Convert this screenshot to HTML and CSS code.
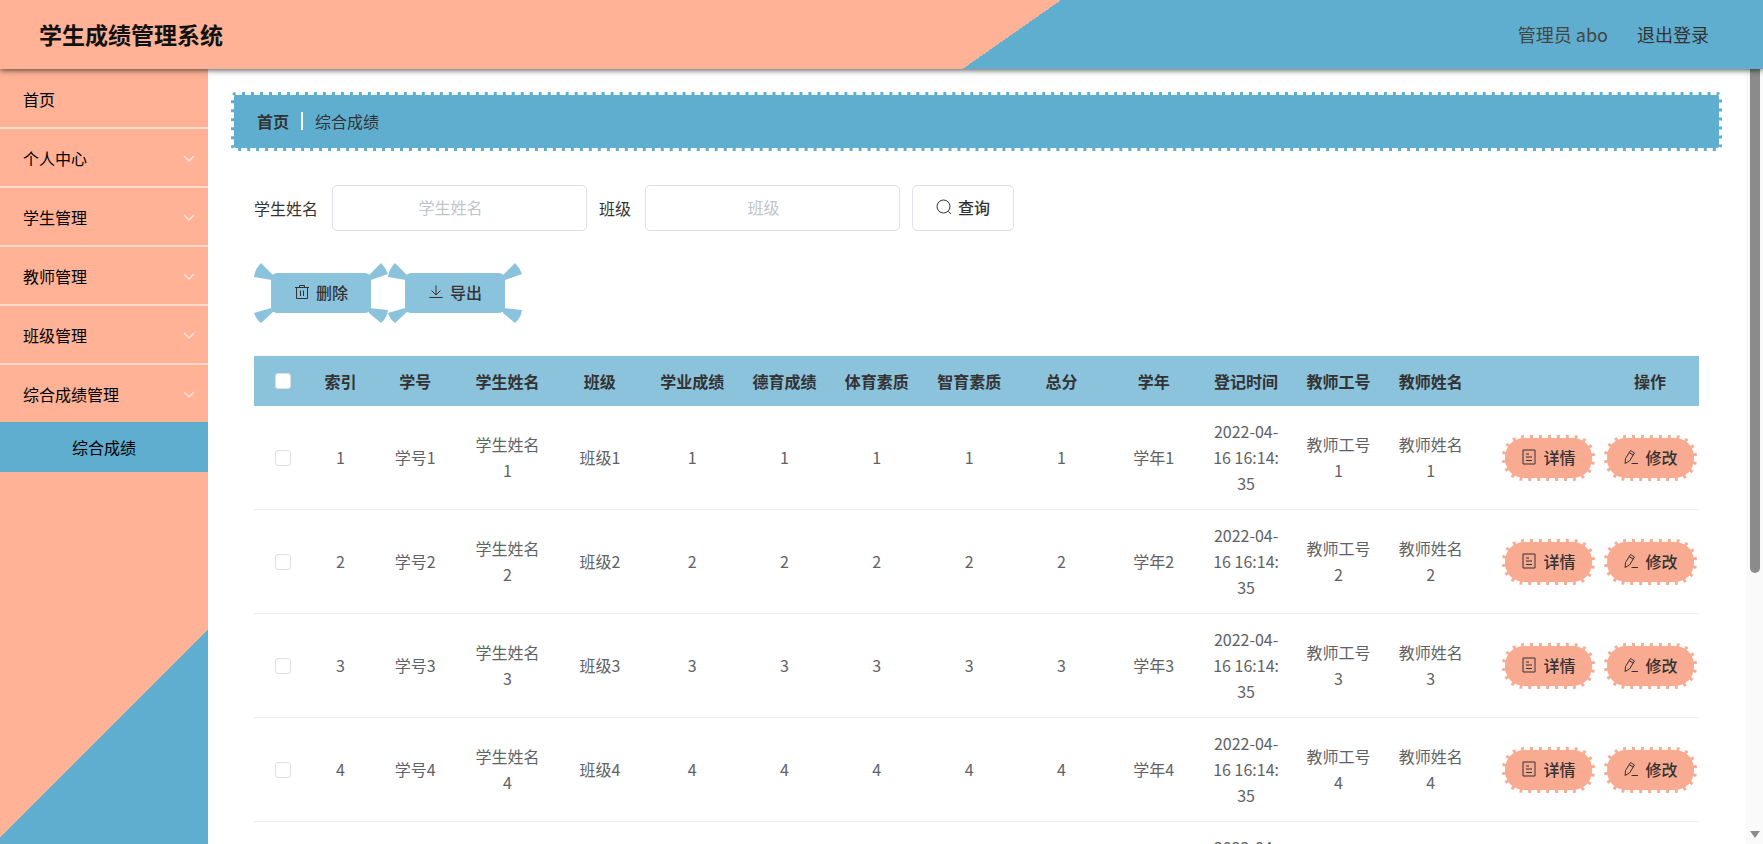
FILE: index.html
```html
<!DOCTYPE html>
<html lang="zh-CN">
<head>
    <meta charset="UTF-8" />
    <title>学生成绩管理系统</title>
    <link rel="stylesheet" href="styles.css">
</head>
<body>

<svg class="sprite" aria-hidden="true">
    <symbol id="i-arrow" viewBox="0 0 14 14"><path d="M2 5l5 5 5-5" /></symbol>
    <symbol id="i-search" viewBox="0 0 16 16"><circle cx="7.5" cy="7.5" r="6.5" /><path d="M12.3 12.3L15 15" /></symbol>
    <symbol id="i-delete" viewBox="0 0 16 16"><path d="M1 3.5h14M5.500 3.500V1.500h5v2M2.500 3.500V14.500h11V3.500M6.500 6.500v5.500M9.500 6.500v5.500" /></symbol>
    <symbol id="i-download" viewBox="0 0 16 16"><path d="M8 1.500v9M3.500 6.500L8 11l4.500-4.500M1.500 13.500h13" /></symbol>
    <symbol id="i-detail" viewBox="0 0 16 16"><path d="M2 1h12v14H2zM5 5h3M5 8h6M5 11.500h6" /></symbol>
    <symbol id="i-edit" viewBox="0 0 16 16"><path d="M2 14.500l.5-5L7.500 1.500 11.500 4 6.500 12zM6.200 3.600l4 2.500M8.500 14.500H15" /></symbol>
    <symbol id="i-horns" viewBox="0 0 134 60"><path d="M19 12L7 0Q1 6 0 14L18 17zM115 12L127 0Q132 5 134 11L117 17zM17 45L0 50Q2 56 7 60L20 48zM115 45L134 47Q133 55 127 60L115 50z" /></symbol>
</svg>

<header class="header">
    <h1>学生成绩管理系统</h1>
    <div class="user">
        <span>管理员 abo</span>
        <a href="#">退出登录</a>
    </div>
</header>

<div class="container">
    <nav class="sidebar">
        <a href="#">首页</a>
        <a href="#">个人中心<svg class="arrow"><use href="#i-arrow" /></svg></a>
        <a href="#">学生管理<svg class="arrow"><use href="#i-arrow" /></svg></a>
        <a href="#">教师管理<svg class="arrow"><use href="#i-arrow" /></svg></a>
        <a href="#">班级管理<svg class="arrow"><use href="#i-arrow" /></svg></a>
        <a href="#" class="open">综合成绩管理<svg class="arrow"><use href="#i-arrow" /></svg></a>
        <a href="#" class="sub">综合成绩</a>
    </nav>

    <main class="main">
        <div class="breadcrumb">
            <a href="#">首页</a>
            <span class="line"></span>
            <span>综合成绩</span>
        </div>

        <form class="search">
            <label for="name">学生姓名</label>
            <input type="text" id="name" placeholder="学生姓名">
            <label for="grade">班级</label>
            <input type="text" id="grade" placeholder="班级">
            <button type="button"><svg class="icon"><use href="#i-search" /></svg>查询</button>
        </form>

        <div class="actions">
            <button type="button"><svg class="horns"><use href="#i-horns" /></svg><svg class="icon"><use href="#i-delete" /></svg>删除</button>
            <button type="button"><svg class="horns"><use href="#i-horns" /></svg><svg class="icon"><use href="#i-download" /></svg>导出</button>
        </div>

        <table>
            <colgroup>
                <col class="col-check">
                <col class="col-index">
                <col span="12">
                <col class="col-ops">
            </colgroup>
            <thead>
                <tr>
                    <th><input type="checkbox" aria-label="全选"></th>
                    <th>索引</th>
                    <th>学号</th>
                    <th>学生姓名</th>
                    <th>班级</th>
                    <th>学业成绩</th>
                    <th>德育成绩</th>
                    <th>体育素质</th>
                    <th>智育素质</th>
                    <th>总分</th>
                    <th>学年</th>
                    <th>登记时间</th>
                    <th>教师工号</th>
                    <th>教师姓名</th>
                    <th class="ops-title">操作</th>
                </tr>
            </thead>
            <tbody id="rows"></tbody>
        </table>
    </main>

    <div class="scrollbar" aria-hidden="true">
        <div class="thumb"></div>
        <div class="down"></div>
    </div>
</div>

<script>
    const rows = document.getElementById('rows');

    for (let i = 1; i <= 5; i++) {
        const cells = [i, '学号' + i, '学生姓名' + i, '班级' + i, i, i, i, i, i,
            '学年' + i, '2022-04-16 16:14:35', '教师工号' + i, '教师姓名' + i];
        const tr = document.createElement('tr');

        tr.innerHTML = '<td><input type="checkbox" aria-label="选择' + i + '"></td>' +
            cells.map(c => '<td>' + c + '</td>').join('') +
            '<td class="ops"><div>' +
            '<button type="button"><svg class="icon"><use href="#i-detail" /></svg>详情</button>' +
            '<button type="button"><svg class="icon"><use href="#i-edit" /></svg>修改</button>' +
            '</div></td>';
        rows.appendChild(tr);
    }
</script>

</body>
</html>
```
FILE: styles.css
```css
* {
    box-sizing: border-box;
}

body {
    margin: 0;
    height: 100vh;
    display: flex;
    flex-direction: column;
    overflow: hidden;
    font-family: "Noto Sans CJK SC", sans-serif;
    font-size: 16px;
    line-height: 26px;
    color: #333;
    background: #fff;
}

a {
    color: inherit;
    text-decoration: none;
}

button, input {
    font: inherit;
    color: inherit;
}

button {
    cursor: pointer;
}

.sprite {
    position: absolute;
    width: 0;
    height: 0;
}

.icon, .arrow {
    fill: none;
    stroke: currentColor;
}

.icon {
    width: 16px;
    height: 16px;
}

/* header */
.header {
    flex: none;
    height: 69px;
    padding: 0 54px 2px 39px;
    display: flex;
    align-items: center;
    justify-content: space-between;
    background: linear-gradient(145deg, #ffb296 57%, #5fadcf 57%);
    box-shadow: 0 1px 6px rgba(0, 0, 0, 0.7);
    z-index: 2;
}

.header h1 {
    margin: 0;
    font-size: 23px;
    color: #111;
}

.user {
    display: flex;
    gap: 29px;
    font-size: 18px;
}

.user span {
    color: #444;
}

.container {
    flex: 1;
    min-height: 0;
    display: flex;
}

/* sidebar */
.sidebar {
    flex: none;
    width: 208px;
    padding-top: 1px;
    background: linear-gradient(315deg, #5fadcf 152px, #ffb296 152px);
    color: #000;
}

.sidebar a {
    display: flex;
    align-items: center;
    justify-content: space-between;
    height: 59px;
    padding: 0 12px 0 23px;
    border-bottom: 2px solid #ffd9cc;
}

.sidebar .open {
    height: 57px;
    border: none;
}

.sidebar .sub {
    height: 50px;
    justify-content: center;
    padding: 0;
    border: none;
    background: #5fadcf;
}

.arrow {
    width: 14px;
    height: 14px;
    color: #ffe4da;
    stroke-width: 1.5;
}

/* content */
.main {
    flex: 1;
    min-width: 0;
    overflow-y: auto;
    scrollbar-width: none;
    padding: 23px 24px 0 23px;
}

.breadcrumb {
    display: flex;
    align-items: center;
    gap: 12px;
    height: 59px;
    padding: 0 23px 2px;
    border: 3px dashed #fff;
    border-radius: 5px;
    background: #5fadcf;
}

.breadcrumb a {
    font-weight: bold;
}

.line {
    width: 2px;
    height: 18px;
    background: #fff;
}

.search {
    display: flex;
    align-items: center;
    gap: 12px;
    margin: 34px 23px 0;
}

.search label {
    margin-right: 2px;
}

.search input {
    width: 255px;
    height: 46px;
    padding: 0 34px 2px 16px;
    border: 1px solid #dcdfe6;
    border-radius: 5px;
    text-align: center;
}

.search input::placeholder {
    color: #c0c4cc;
}

.search button, .actions button, .ops button {
    display: flex;
    align-items: center;
    justify-content: center;
    gap: 6px;
    padding: 0 0 2px;
    font-weight: 500;
}

.search button {
    width: 102px;
    height: 46px;
    border: 1px solid #dcdfe6;
    border-radius: 5px;
    background: #fff;
}

.actions {
    display: flex;
    gap: 34px;
    margin: 42px 40px 43px;
}

.actions button {
    position: relative;
    width: 100px;
    height: 40px;
    border: none;
    border-radius: 6px;
    background: #8bc2dc;
}

.horns {
    position: absolute;
    top: -10px;
    left: -17px;
    width: 134px;
    height: 60px;
    fill: #8bc2dc;
}

/* table */
table {
    width: calc(100% - 46px);
    margin: 0 23px;
    table-layout: fixed;
    border-collapse: collapse;
    text-align: center;
    word-break: break-all;
    color: #606266;
}

.col-check {
    width: 58px;
}

.col-index {
    width: 57px;
}

.col-ops {
    width: 222px;
}

th {
    height: 50px;
    padding: 0;
    background: #8bc2dc;
    color: #333;
}

td {
    padding: 12px 11px 13px;
    border-bottom: 1px solid #ebeef5;
}

th input, td input {
    appearance: none;
    display: block;
    width: 16px;
    height: 16px;
    margin: 0 auto;
    border: 1px solid #dcdfe6;
    border-radius: 3px;
    background: #fff;
}

td:first-child {
    padding: 0;
}

.ops-title {
    padding-right: 33px;
    text-align: right;
}

td.ops {
    padding: 0 2px 0 0;
}

.ops div {
    display: flex;
    justify-content: flex-end;
    gap: 9px;
}

.ops button {
    width: 93px;
    height: 46px;
    border: 3px dashed #fff;
    border-radius: 22px;
    background: #f9ab91;
    color: #333;
}

/* scroll track on the right */
.scrollbar {
    flex: none;
    width: 17px;
    display: flex;
    flex-direction: column;
    align-items: center;
    justify-content: space-between;
    background: #fafafa;
}

.thumb {
    width: 10px;
    height: 65%;
    border-radius: 0 0 5px 5px;
    background: #8b8b8b;
}

.down {
    margin-bottom: 6px;
    border: 5px solid transparent;
    border-top: 7px solid #8b8b8b;
    border-bottom: none;
}
```
